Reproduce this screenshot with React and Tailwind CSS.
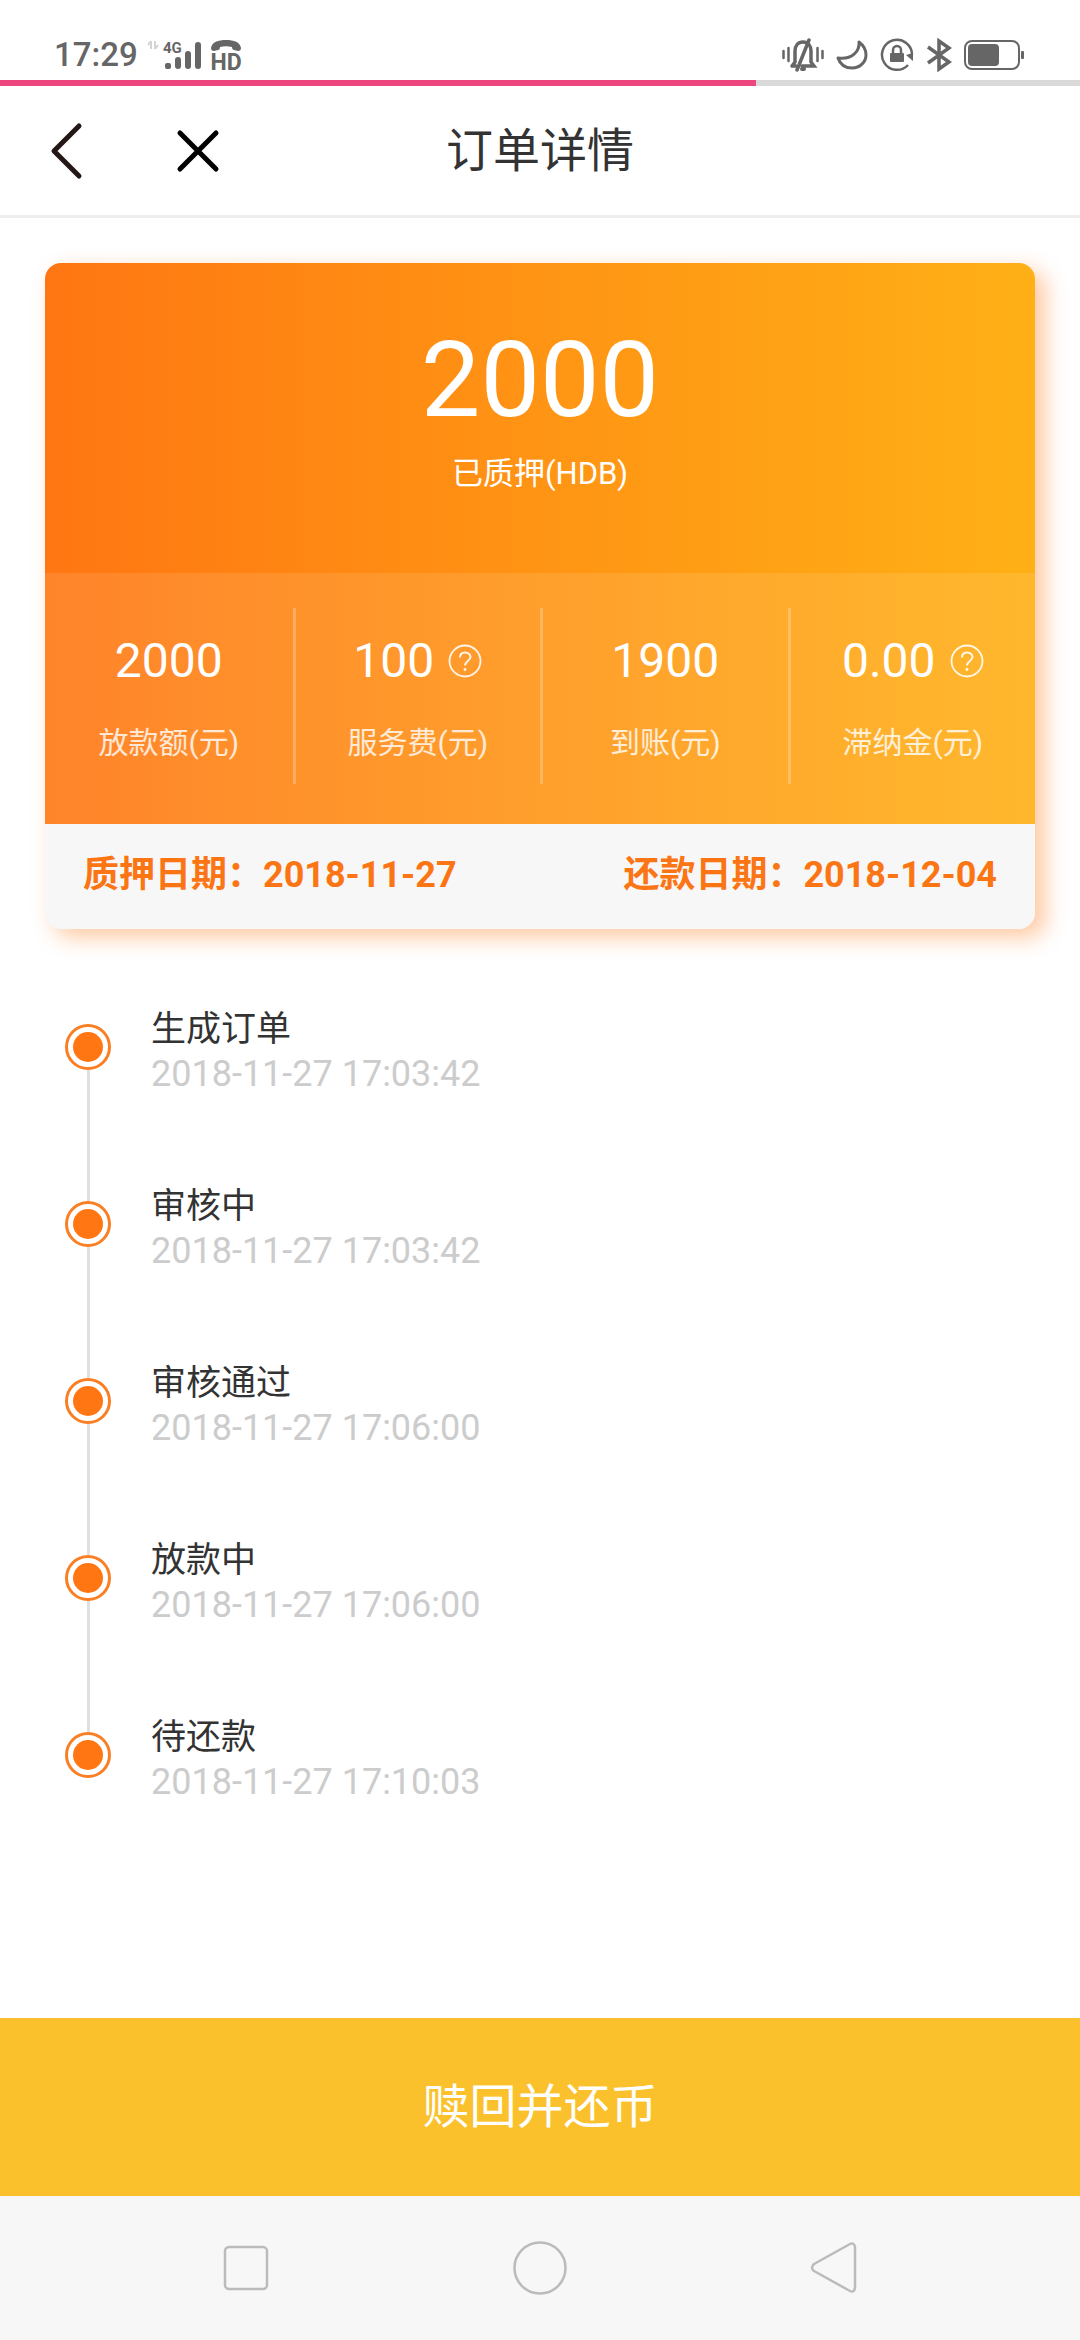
import React from 'react';

const stats = [
  { value: '2000', label: '放款额(元)' },
  { value: '100', label: '服务费(元)', help: true },
  { value: '1900', label: '到账(元)' },
  { value: '0.00', label: '滞纳金(元)', help: true },
];

const steps = [
  { title: '生成订单', time: '2018-11-27 17:03:42' },
  { title: '审核中', time: '2018-11-27 17:03:42' },
  { title: '审核通过', time: '2018-11-27 17:06:00' },
  { title: '放款中', time: '2018-11-27 17:06:00' },
  { title: '待还款', time: '2018-11-27 17:10:03' },
];

const SignalIcon = () => (
  <svg className="w-14 h-8 overflow-visible" viewBox="0 0 56 32" fill="none" aria-hidden="true">
    <path d="M5 2v8M5 2L2 6M9 10V2M9 10l3-4" stroke="#d4d4d4" strokeWidth="2" />
    <text x="17" y="14" fill="#666" fontSize="15" fontWeight="700">4G</text>
    <rect x="19" y="24" width="6" height="6" rx="2" fill="#666" />
    <rect x="29" y="18" width="6" height="12" rx="3" fill="#666" />
    <rect x="39" y="12" width="6" height="18" rx="3" fill="#666" />
    <rect x="49" y="3" width="6" height="27" rx="3" fill="#666" />
  </svg>
);

const HdCallIcon = () => (
  <svg className="w-8 h-8 overflow-visible" viewBox="0 0 32 32" aria-hidden="true">
    <path d="M1 9C2 3 8 1 16 1s14 2 15 8c0 2-1 3-3 3l-4-1c-1 0-2-1-2-3-4-1-8-1-12 0 0 2-1 3-2 3l-4 1C2 12 1 11 1 9z" fill="#666" />
    <text x="16" y="31" textAnchor="middle" fill="#666" fontSize="23" fontWeight="700">HD</text>
  </svg>
);

const BellOffIcon = () => (
  <svg className="w-[42px] h-[34px]" viewBox="0 0 42 34" fill="none" stroke="#666" strokeLinecap="round" aria-hidden="true">
    <path d="M1.5 13v7M6.5 10v13M35.500 10v13M40.500 13v7" strokeWidth="2.500" />
    <path d="M10 28h4M20 28h12l-3-4V13c0-5-3-9-8-9s-8 4-8 9v11l-3 4" strokeWidth="3.500" />
    <path d="M27 2L15 32" strokeWidth="3.500" />
    <path d="M20 31h2" strokeWidth="4" />
  </svg>
);

const MoonIcon = () => (
  <svg className="w-8 h-8" viewBox="0 0 32 32" fill="none" aria-hidden="true">
    <path d="M23 3c1 9-7 18-21 16 2 6 7 10 14 10 8 0 14-6 14-13 0-6-3-10-7-13z" stroke="#666" strokeWidth="3" strokeLinejoin="round" />
  </svg>
);

const RotationLockIcon = () => (
  <svg className="w-[34px] h-[34px]" viewBox="0 0 34 34" fill="none" aria-hidden="true">
    <path d="M28 27A15 15 0 1 1 32 17" stroke="#666" strokeWidth="2.500" />
    <path d="M26 17l7-2v8z" fill="#666" />
    <rect x="10" y="15" width="14" height="9" rx="1" fill="#666" />
    <path d="M13 15v-3a4 4 0 0 1 8 0v3" stroke="#666" strokeWidth="2.500" />
  </svg>
);

const BluetoothIcon = () => (
  <svg className="w-[26px] h-[34px]" viewBox="0 0 26 34" fill="none" aria-hidden="true">
    <path d="M2 9l21 15-10 7V3l10 7L2 25" stroke="#666" strokeWidth="3.500" />
  </svg>
);

const BatteryIcon = () => (
  <svg className="w-[60px] h-8" viewBox="0 0 60 32" fill="none" aria-hidden="true">
    <rect x="1" y="2" width="54" height="28" rx="7" stroke="#666" strokeWidth="2" />
    <rect x="4" y="5" width="31" height="22" rx="4" fill="#666" />
    <rect x="57" y="12" width="3" height="8" rx="1" fill="#666" />
  </svg>
);

const HelpIcon = () => (
  <svg className="w-[34px] h-[34px] opacity-90" viewBox="0 0 34 34" fill="none" stroke="#fff" aria-hidden="true">
    <circle cx="17" cy="17" r="15.500" strokeWidth="1.800" />
    <path d="M12 13.500c0-3 2-5 5-5s5.500 2 5.500 4.500c0 4-5.500 4-5.500 8.500" strokeWidth="2" />
    <circle cx="17" cy="25.500" r="1.400" fill="#fff" stroke="none" />
  </svg>
);

const StatusBar = () => (
  <div className="flex h-20 items-center justify-between pt-[30px] pl-[54px] pr-14">
    <div className="flex items-center">
      <span className="mr-2 text-[33px] font-medium text-[#666]">17:29</span>
      <SignalIcon />
      <span className="ml-2 flex"><HdCallIcon /></span>
    </div>
    <div className="flex items-center gap-3">
      <BellOffIcon />
      <MoonIcon />
      <RotationLockIcon />
      <BluetoothIcon />
      <BatteryIcon />
    </div>
  </div>
);

const Header = () => (
  <header className="grid h-[132px] grid-cols-[1fr_auto_1fr] items-center border-b-3 border-[#eee] px-12">
    <div className="flex items-center gap-[92px]">
      <button type="button" aria-label="返回">
        <svg className="w-9 h-15" viewBox="0 0 36 60" fill="none" stroke="#231815" strokeWidth="5" strokeLinecap="round" strokeLinejoin="round">
          <path d="M31 5L6 30l25 25" />
        </svg>
      </button>
      <button type="button" aria-label="关闭">
        <svg className="w-11 h-11" viewBox="0 0 44 44" fill="none" stroke="#000" strokeWidth="5" strokeLinecap="round">
          <path d="M4 4l36 36M40 4L4 40" />
        </svg>
      </button>
    </div>
    <h1 className="text-[47px] leading-[60px] text-[#333]">订单详情</h1>
  </header>
);

const OrderCard = () => (
  <section className="mx-[45px] mt-[45px] overflow-hidden rounded-2xl bg-[#f7f7f7] shadow-[10px_8px_22px_rgba(255,118,18,0.4)]">
    <div className="bg-linear-to-r from-[#ff7612] to-[#ffb016] text-white">
      <div className="flex h-[310px] flex-col items-center pt-[57px]">
        <p className="text-[106px] leading-[120px]">2000</p>
        <p className="mt-3 text-[31px] leading-[44px]">已质押(HDB)</p>
      </div>
      <div className="grid grid-cols-4 bg-white/10 pt-[35px] pb-10">
        {stats.map((stat) => (
          <div key={stat.label} className="flex h-[176px] flex-col items-center border-l-3 border-white/25 pt-[25px] first:border-l-0">
            <div className="flex items-center gap-[14px]">
              <span className="text-[48px] leading-[56px]">{stat.value}</span>
              {stat.help && (
                <button type="button" aria-label={`${stat.label}说明`}>
                  <HelpIcon />
                </button>
              )}
            </div>
            <p className="mt-8 text-[30px] leading-[44px] text-white/80">{stat.label}</p>
          </div>
        ))}
      </div>
    </div>
    <div className="flex h-[105px] items-center justify-between px-[38px] pb-1 text-[36px] leading-[44px] font-bold text-[#fb7514]">
      <p>质押日期：2018-11-27</p>
      <p>还款日期：2018-12-04</p>
    </div>
  </section>
);

const Timeline = () => (
  <ol className="mt-[95px] px-[65px]">
    {steps.map((step, index) => (
      <li key={step.title} className="flex min-h-[177px] gap-10">
        <div className="flex flex-col items-center">
          <span className="flex h-[46px] w-[46px] items-center justify-center rounded-full border-3 border-[#f97f24]">
            <span className="h-[30px] w-[30px] rounded-full bg-[#ff7612]" />
          </span>
          {index < steps.length - 1 && <span className="w-[3px] flex-1 bg-[#e0e0e0]" />}
        </div>
        <div className="-mt-4">
          <p className="text-[35px] leading-[44px] text-[#333]">{step.title}</p>
          <p className="text-[36px] leading-[44px] text-[#ccc]">{step.time}</p>
        </div>
      </li>
    ))}
  </ol>
);

const SystemNav = () => (
  <nav className="flex h-36 items-center justify-center gap-[238px] bg-[#f7f7f7]">
    <button type="button" aria-label="最近任务">
      <svg className="w-14 h-14" viewBox="0 0 56 56" fill="none" stroke="#bbb" strokeWidth="2.500">
        <rect x="7" y="7" width="42" height="42" rx="4" />
      </svg>
    </button>
    <button type="button" aria-label="主页">
      <svg className="w-14 h-14" viewBox="0 0 56 56" fill="none" stroke="#bbb" strokeWidth="2.500">
        <circle cx="28" cy="28" r="25.500" />
      </svg>
    </button>
    <button type="button" aria-label="后退">
      <svg className="w-14 h-14" viewBox="0 0 56 56" fill="none" stroke="#bbb" strokeWidth="2.500" strokeLinejoin="round">
        <path d="M8 24L44 4q4-2 5 3v41q-1 5-5 3L8 31q-4-3 0-7z" />
      </svg>
    </button>
  </nav>
);

export default function App() {
  return (
    <div className="flex min-h-screen flex-col bg-white font-['Roboto','Noto_Sans_CJK_SC',sans-serif]">
      <StatusBar />
      <div className="h-[6px] bg-[#dadada]">
        <div className="h-full w-[70%] bg-[#ee467f]" />
      </div>
      <Header />
      <main className="flex-1">
        <OrderCard />
        <Timeline />
      </main>
      <button type="button" className="h-[178px] bg-[#fac12c] text-[47px] leading-[60px] text-white">
        赎回并还币
      </button>
      <SystemNav />
    </div>
  );
}
